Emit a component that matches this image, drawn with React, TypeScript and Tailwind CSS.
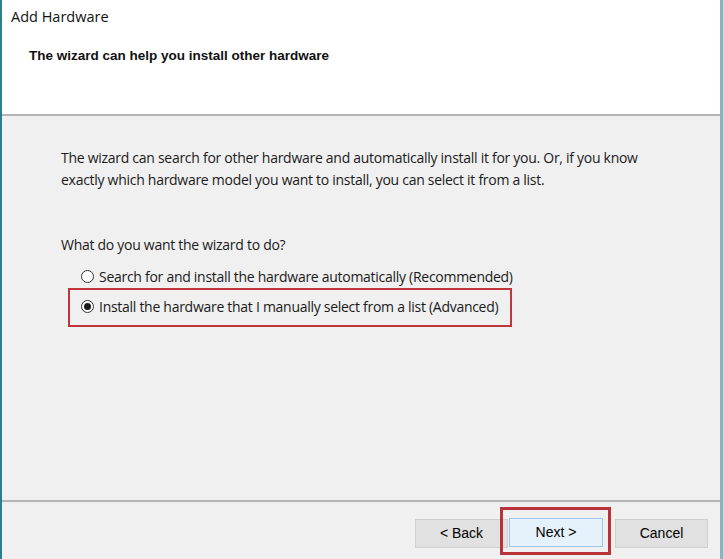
import React from "react";

const ui = { fontFamily: '"Open Sans", "Noto Sans", sans-serif' };
const arial = { fontFamily: '"Liberation Sans", Arial, sans-serif' };

const Radio = ({ checked }: { checked?: boolean }) => (
  <span className="w-[13px] h-[13px] rounded-full border border-[#333] bg-white flex items-center justify-center shrink-0">
    {checked && <span className="w-[7px] h-[7px] rounded-full bg-[#1a1a1a]" />}
  </span>
);

const Button = ({ label, primary }: { label: string; primary?: boolean }) => (
  <div
    style={arial}
    className={
      "h-[29px] flex items-center justify-center text-[14px] text-black border " +
      (primary
        ? "w-[94px] bg-[#e5f1fb] border-[#9ec5ea]"
        : "w-[93px] bg-[#e1e1e1] border-[#d0d0d0]")
    }
  >
    {label}
  </div>
);

export default function App() {
  return (
    <div className="w-[723px] h-[559px] flex flex-col border-l-2 border-l-[#2b7f8c] border-r-[3px] border-r-[#8fb0bd] bg-[#f0f0f0] overflow-hidden">
      {/* header */}
      <div className="h-[116px] bg-white border-b-2 border-b-[#b4b4b4] flex flex-col">
        <div style={ui} className="pl-[9px] pt-[7px] text-[14.5px] leading-[20px] text-[#111]">
          Add Hardware
        </div>
        <div style={arial} className="pl-[27px] pt-[21px] text-[13.5px] leading-[16px] font-bold text-[#111]">
          The wizard can help you install other hardware
        </div>
      </div>

      {/* body */}
      <div style={ui} className="flex-1 pl-[59px] pt-[31px] text-[14px] text-[#1a1a1a] tracking-[-0.28px]">
        <p className="leading-[22px]">
          The wizard can search for other hardware and automatically install it for you. Or, if you know
          <br />
          exactly which hardware model you want to install, you can select it from a list.
        </p>
        <p className="mt-[43px] leading-[22px]">What do you want the wizard to do?</p>
        <div className="mt-[9px] ml-[20px] h-[22px] flex items-center gap-[5px]">
          <Radio />
          <span>Search for and install the hardware automatically (Recommended)</span>
        </div>
        <div className="mt-[1px] ml-[7px] w-[444px] h-[39px] border-2 border-[#c0343c] pl-[11px] pb-[3px] flex items-center gap-[5px]">
          <Radio checked />
          <span>Install the hardware that I manually select from a list (Advanced)</span>
        </div>
      </div>

      {/* footer */}
      <div className="h-[59px] border-t-2 border-t-[#b4b4b4] flex items-start pl-[413px]">
        <div className="mt-[17px]">
          <Button label="< Back" />
        </div>
        <div className="ml-[-8px] mt-[5px] w-[111px] h-[48px] border-[3px] border-[#b8323a] pl-[6px] pt-[8px]">
          <Button label="Next >" primary />
        </div>
        <div className="ml-[4px] mt-[17px]">
          <Button label="Cancel" />
        </div>
      </div>
    </div>
  );
}
